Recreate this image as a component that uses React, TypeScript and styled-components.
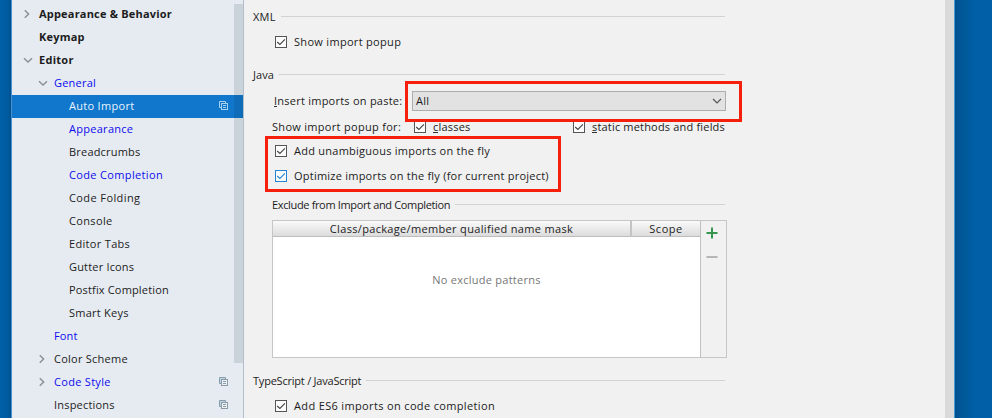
import React from 'react';
import styled, { createGlobalStyle, css } from 'styled-components';

const GlobalStyle = createGlobalStyle`
  * { box-sizing: border-box; }
  body {
    margin: 0;
    overflow: hidden;
    font: 11px/16px "Open Sans", "Noto Sans", sans-serif;
    color: #1c1c1c;
  }
`;

const Desktop = styled.div`
  display: flex;
  width: 992px;
  height: 418px;
  padding-left: 11px;
  background: linear-gradient(90deg, #0060a8 0, #005b9f 8px, #004f8d 11px, #004f8d 955px, #005797 960px, #005a9b 966px, #005fa6 974px);
`;

const DialogWindow = styled.div`
  display: flex;
  width: 944px;
  height: 418px;
  border-left: 1px solid #4a91cc;
  border-right: 1px solid #4a9bd0;
  background: #f1f1f1;
`;

/* ---------- settings tree ---------- */

const Sidebar = styled.nav`
  position: relative;
  width: 232px;
  height: 418px;
  padding-top: 3px;
  overflow: hidden;
  background: #e6ebf1;
  border-right: 1px solid #b3bfca;
`;

const SidebarScrollThumb = styled.div`
  position: absolute;
  top: 4px;
  right: 0;
  width: 9px;
  height: 359px;
  background: rgba(0, 30, 45, 0.115);
`;

type Tone = 'plain' | 'bold' | 'link';

const TreeRow = styled.div<{ $depth: number; $selected?: boolean }>`
  display: flex;
  align-items: center;
  height: 22.98px;
  padding-left: ${p => 10 + p.$depth * 15}px;
  padding-right: 14px;
  ${p => p.$selected && css`
    background: #1177cc;
    color: #e9f4fd;
  `}
`;

const ArrowSlot = styled.span`
  display: flex;
  flex: none;
  width: 17px;
`;

const TreeLabel = styled.span<{ $tone: Tone; $spacing: number }>`
  flex: 1;
  white-space: nowrap;
  letter-spacing: ${p => p.$spacing}px;
  ${p => p.$tone === 'bold' && css`font-weight: 700;`}
  ${p => p.$tone === 'link' && css`color: #0c0cee;`}
`;

const TreeArrow = ({ open }: { open: boolean }) => (
  <svg width="12" height="12" viewBox="0 0 12 12" fill="none" stroke="#8b9196" strokeWidth="1.5">
    <path d={open ? 'M2 4.2 6 8 10 4.2' : 'M2.8 2.2 6.6 6 2.8 9.8'} />
  </svg>
);

const ProjectIcon = ({ selected }: { selected?: boolean }) => {
  const stroke = selected ? '#a9d2ee' : '#8b9ba8';
  return (
    <svg width="10" height="10" viewBox="0 0 10 10" fill="none" stroke={stroke}>
      <path d="M2.5 6.5h-2v-6h6v2" fill={selected ? 'none' : '#b9d5e6'} />
      <rect x="2.5" y="2.5" width="6" height="6" fill={selected ? '#1177cc' : '#edf1f4'} />
      <path d="M4 4.5h3M4 6.5h3" />
    </svg>
  );
};

interface TreeItem {
  label: string;
  depth: number;
  spacing: number;
  tone?: Tone;
  arrow?: 'open' | 'closed';
  selected?: boolean;
  project?: boolean;
}

const treeItems: TreeItem[] = [
  { label: 'Appearance & Behavior', depth: 0, spacing: 0.2, tone: 'bold', arrow: 'closed' },
  { label: 'Keymap', depth: 0, spacing: 0.2, tone: 'bold' },
  { label: 'Editor', depth: 0, spacing: 0.28, tone: 'bold', arrow: 'open' },
  { label: 'General', depth: 1, spacing: 0.22, tone: 'link', arrow: 'open' },
  { label: 'Auto Import', depth: 2, spacing: 0.3, selected: true, project: true },
  { label: 'Appearance', depth: 2, spacing: 0.28, tone: 'link' },
  { label: 'Breadcrumbs', depth: 2, spacing: 0.2 },
  { label: 'Code Completion', depth: 2, spacing: 0.35, tone: 'link' },
  { label: 'Code Folding', depth: 2, spacing: 0.4 },
  { label: 'Console', depth: 2, spacing: 0.35 },
  { label: 'Editor Tabs', depth: 2, spacing: 0.32 },
  { label: 'Gutter Icons', depth: 2, spacing: 0.18 },
  { label: 'Postfix Completion', depth: 2, spacing: 0.16 },
  { label: 'Smart Keys', depth: 2, spacing: 0.25 },
  { label: 'Font', depth: 1, spacing: 0.15, tone: 'link' },
  { label: 'Color Scheme', depth: 1, spacing: 0.25, arrow: 'closed' },
  { label: 'Code Style', depth: 1, spacing: 0.3, tone: 'link', arrow: 'closed', project: true },
  { label: 'Inspections', depth: 1, spacing: 0.2, project: true },
];

/* ---------- settings page ---------- */

const Page = styled.main`
  width: 701px;
  height: 418px;
  padding: 4px 0 0 9px;
`;

const PageContent = styled.div`
  display: flex;
  flex-direction: column;
  width: 474px;
`;

const PageScrollbar = styled.div`
  flex: 1;
  background: #dadada;
`;

const Section = styled.section<{ $gap?: number }>`
  display: flex;
  flex-direction: column;
  margin-top: ${p => p.$gap ?? 0}px;
`;

const SectionTitle = styled.div<{ $indent?: number }>`
  display: flex;
  align-items: center;
  height: 26px;
  gap: 5px;
  padding-left: ${p => p.$indent ?? 0}px;
  padding-right: 2px;
  &::after {
    content: "";
    flex: 1;
    height: 1px;
    margin-top: -2px;
    background: #d2d2d2;
  }
`;

const Text = styled.span<{ $spacing?: number }>`
  white-space: nowrap;
  letter-spacing: ${p => p.$spacing ?? 0.3}px;
`;

const Mnemonic = styled.span`
  box-shadow: inset 0 -1px #333;
  display: inline-block;
  height: 14px;
  line-height: 16px;
  vertical-align: top;
`;

const OptionRow = styled.div<{ $height: number; $indent?: number }>`
  display: flex;
  align-items: center;
  height: ${p => p.$height}px;
  padding-left: ${p => p.$indent ?? 22}px;
`;

const FieldLabel = styled.div<{ $width: number }>`
  flex: none;
  display: flex;
  width: ${p => p.$width}px;
`;

const CheckField = styled.label<{ $width?: number }>`
  display: flex;
  align-items: center;
  gap: 7px;
  ${p => p.$width && css`width: ${p.$width}px;`}
`;

const CheckBox = styled.span<{ $focused?: boolean }>`
  display: flex;
  flex: none;
  width: 12px;
  height: 12px;
  border: 1px solid ${p => (p.$focused ? '#2684d4' : '#555')};
  background: #fcfcfc;
  color: ${p => (p.$focused ? '#2684d4' : '#444')};
`;

const Check = ({ focused }: { focused?: boolean }) => (
  <CheckBox $focused={focused}>
    <svg width="10" height="10" viewBox="0 0 10 10" fill="none" stroke="currentColor" strokeWidth="1.1">
      <path d="M1.2 5 3.9 7.5 8.9 2.3" />
    </svg>
  </CheckBox>
);

const Anchor = styled.div`
  position: relative;
`;

const Select = styled.div`
  display: flex;
  align-items: center;
  justify-content: space-between;
  width: 314px;
  height: 20px;
  padding: 0 3px;
  border: 1px solid #adadad;
  background: #e2e2e2;
`;

const Highlight = styled.div<{ $left: number; $top: number; $width: number; $height: number }>`
  position: absolute;
  z-index: 1;
  left: ${p => p.$left}px;
  top: ${p => p.$top}px;
  width: ${p => p.$width}px;
  height: ${p => p.$height}px;
  border: 3px solid #f51f0b;
  pointer-events: none;
`;

const TableFrame = styled.div`
  display: grid;
  grid-template-columns: 428px 25px;
  width: 455px;
  height: 138px;
  margin: 2px 0 0 19px;
  border: 1px solid #c6c6c6;
  flex: none;
`;

const TableBody = styled.div`
  display: flex;
  flex-direction: column;
  border-right: 1px solid #c0c0c0;
  background: #fff;
`;

const TableHead = styled.div`
  display: grid;
  grid-template-columns: 359px 1fr;
  height: 16px;
  border-bottom: 1px solid #bdbdbd;
  background: linear-gradient(#fafafa, #dcdcdc);
`;

const HeadCell = styled.div<{ $divided?: boolean }>`
  display: flex;
  justify-content: center;
  line-height: 16px;
  ${p => p.$divided && css`border-right: 2px solid #c4c4c4;`}
`;

const EmptyNote = styled.div`
  display: flex;
  justify-content: center;
  padding-top: 35px;
  color: #777;
`;

const TableTools = styled.div`
  display: flex;
  flex-direction: column;
  align-items: center;
  padding-top: 6px;
  padding-right: 3px;
  gap: 12px;
`;

export default function App() {
  return (
    <>
      <GlobalStyle />
      <Desktop>
        <DialogWindow>
          <Sidebar>
            {treeItems.map(item => (
              <TreeRow key={item.label} $depth={item.depth} $selected={item.selected}>
                <ArrowSlot>{item.arrow && <TreeArrow open={item.arrow === 'open'} />}</ArrowSlot>
                <TreeLabel $tone={item.tone ?? 'plain'} $spacing={item.spacing}>{item.label}</TreeLabel>
                {item.project && <ProjectIcon selected={item.selected} />}
              </TreeRow>
            ))}
            <SidebarScrollThumb />
          </Sidebar>

          <Page>
            <PageContent>
              <Section>
                <SectionTitle><Text $spacing={0.2}>XML</Text></SectionTitle>
                <OptionRow $height={24}>
                  <CheckField><Check /><Text $spacing={0.31}>Show import popup</Text></CheckField>
                </OptionRow>
              </Section>

              <Section $gap={8}>
                <SectionTitle><Text $spacing={0.1}>Java</Text></SectionTitle>
                <OptionRow $height={26} $indent={21}>
                  <FieldLabel $width={138}>
                    <Text $spacing={0.24}><Mnemonic>I</Mnemonic>nsert imports on paste:</Text>
                  </FieldLabel>
                  <Anchor>
                    <Select>
                      <Text>All</Text>
                      <svg width="10" height="10" viewBox="0 0 10 10" fill="none" stroke="#555" strokeWidth="1.2">
                        <path d="M1 3 5 7 9 3" />
                      </svg>
                    </Select>
                    <Highlight $left={-7} $top={-10} $width={337} $height={41} />
                  </Anchor>
                </OptionRow>
                <OptionRow $height={25} $indent={19}>
                  <FieldLabel $width={142}><Text $spacing={0.3}>Show import popup for:</Text></FieldLabel>
                  <CheckField $width={159}>
                    <Check /><Text $spacing={0.2}><Mnemonic>c</Mnemonic>lasses</Text>
                  </CheckField>
                  <CheckField>
                    <Check /><Text $spacing={0.18}><Mnemonic>s</Mnemonic>tatic methods and fields</Text>
                  </CheckField>
                </OptionRow>
                <Anchor>
                  <OptionRow $height={24}>
                    <CheckField><Check /><Text $spacing={0.25}>Add unambiguous imports on the fly</Text></CheckField>
                  </OptionRow>
                  <OptionRow $height={25}>
                    <CheckField>
                      <Check focused /><Text $spacing={0.23}>Optimize imports on the fly (for current project)</Text>
                    </CheckField>
                  </OptionRow>
                  <Highlight $left={12} $top={-3} $width={296} $height={56} />
                </Anchor>
              </Section>

              <Section $gap={4}>
                <SectionTitle $indent={19}>
                  <Text $spacing={-0.35}>Exclude from Import and Completion</Text>
                </SectionTitle>
                <TableFrame>
                  <TableBody>
                    <TableHead>
                      <HeadCell $divided>
                        <Text $spacing={0.33}>Class/package/member qualified name mask</Text>
                      </HeadCell>
                      <HeadCell><Text $spacing={0.5}>Scope</Text></HeadCell>
                    </TableHead>
                    <EmptyNote><Text $spacing={0.25}>No exclude patterns</Text></EmptyNote>
                  </TableBody>
                  <TableTools>
                    <svg width="12" height="12" viewBox="0 0 12 12" stroke="#369650" strokeWidth="2">
                      <path d="M6 .5v11M.5 6h11" />
                    </svg>
                    <svg width="12" height="12" viewBox="0 0 12 12" stroke="#b5b5b5" strokeWidth="2">
                      <path d="M.5 6h11" />
                    </svg>
                  </TableTools>
                </TableFrame>
              </Section>

              <Section $gap={10}>
                <SectionTitle><Text $spacing={-0.22}>TypeScript / JavaScript</Text></SectionTitle>
                <OptionRow $height={24}>
                  <CheckField><Check /><Text $spacing={0.35}>Add ES6 imports on code completion</Text></CheckField>
                </OptionRow>
              </Section>
            </PageContent>
          </Page>
          <PageScrollbar />
        </DialogWindow>
      </Desktop>
    </>
  );
}
